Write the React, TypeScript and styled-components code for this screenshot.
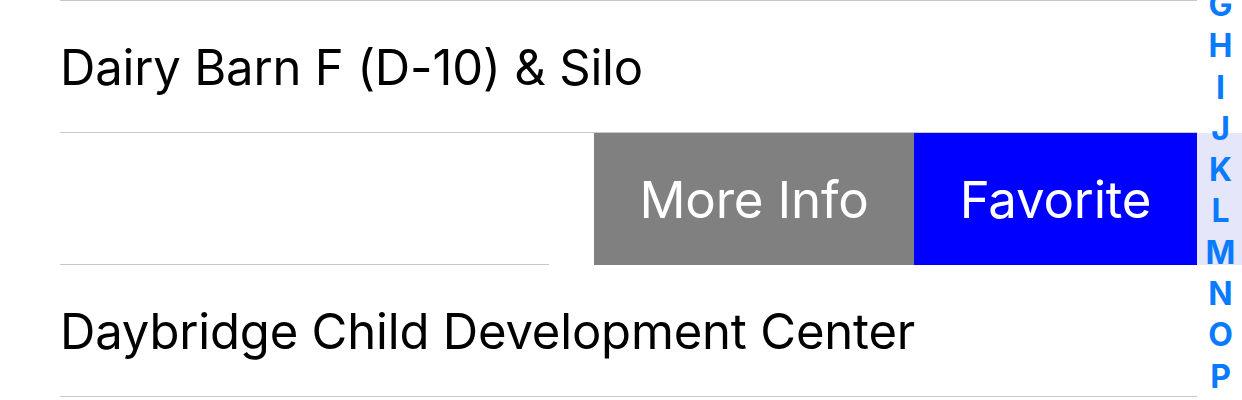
import React from "react";
import styled, { createGlobalStyle } from "styled-components";

const Global = createGlobalStyle`
  html, body { margin: 0; padding: 0; background: #fff; overflow: hidden; }
  body { font-family: Inter, "Noto Sans", sans-serif; -webkit-font-smoothing: antialiased; }
`;

const Screen = styled.div`
  position: relative;
  width: 1242px;
  height: 400px;
  overflow: hidden;
  background: #fff;
`;

const Rule = styled.div`
  height: 1px;
  margin: 0 45px 0 60px;
  background: #c8c7cc;
`;

const Row = styled.div`
  height: 131px;
  display: flex;
  align-items: center;
  padding-left: 60px;
  padding-right: 45px;
`;

const Title = styled.span`
  font-size: 49px;
  color: #000;
  letter-spacing: -0.18px;
  margin-top: 1px;
`;

const SwipedRow = styled.div`
  height: 132px;
  display: flex;
  position: relative;
`;

const ShiftedCell = styled.div`
  width: 594px;
  height: 132px;
  display: flex;
  flex-direction: column;
  justify-content: flex-end;
`;

const CellRule = styled.div`
  height: 1px;
  margin: 0 45px 0 60px;
  background: #c8c7cc;
`;

const Action = styled.div<{ $bg: string; $w: number }>`
  width: ${(p) => p.$w}px;
  height: 132px;
  background: ${(p) => p.$bg};
  color: #fff;
  display: flex;
  align-items: center;
  justify-content: center;
  font-size: 51px;
  letter-spacing: -0.2px;
`;

const Filler = styled.div`
  width: 45px;
  height: 132px;
  background: #e6e6fa;
`;

const IndexBar = styled.div`
  position: absolute;
  right: 0;
  top: -16px;
  width: 45px;
  display: flex;
  flex-direction: column;
  align-items: center;
`;

const IndexLetter = styled.span`
  height: 41.3px;
  line-height: 41.3px;
  font-size: 32px;
  font-weight: 700;
  color: #0a7aff;
  padding-left: 2px;
`;

const letters = ["G", "H", "I", "J", "K", "L", "M", "N", "O", "P"];

export default function App() {
  return (
    <Screen>
      <Global />
      <Rule />
      <Row>
        <Title>Dairy Barn F (D-10) &amp; Silo</Title>
      </Row>
      <Rule />
      <SwipedRow>
        <ShiftedCell>
          <CellRule />
        </ShiftedCell>
        <Action $bg="#808080" $w={320}>More Info</Action>
        <Action $bg="#0000ff" $w={283}>Favorite</Action>
        <Filler />
      </SwipedRow>
      <Row>
        <Title>Daybridge Child Development Center</Title>
      </Row>
      <Rule />
      <IndexBar>
        {letters.map((l) => (
          <IndexLetter key={l}>{l}</IndexLetter>
        ))}
      </IndexBar>
    </Screen>
  );
}
